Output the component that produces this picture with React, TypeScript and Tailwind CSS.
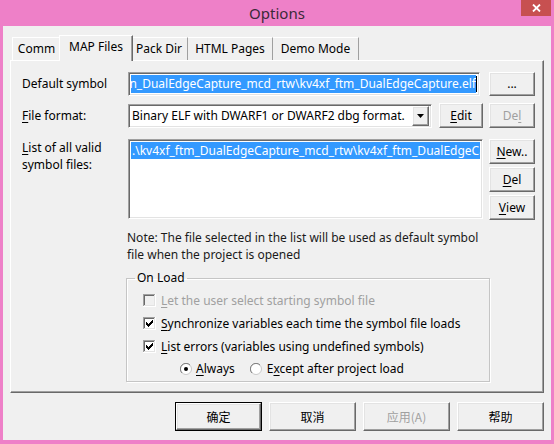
import React from "react";

const raised =
  "border border-t-white border-l-white border-r-[#696969] border-b-[#696969] shadow-[inset_-1px_-1px_0_#a0a0a0,inset_1px_1px_0_#e3e3e3]";
const sunken =
  "border border-t-[#a0a0a0] border-l-[#a0a0a0] border-r-white border-b-white shadow-[inset_1px_1px_0_#696969,inset_-1px_-1px_0_#e3e3e3]";

function U({ children }: { children: React.ReactNode }) {
  return <span className="underline underline-offset-2 decoration-1">{children}</span>;
}

function Btn({
  children,
  className = "",
  disabled = false,
}: {
  children: React.ReactNode;
  className?: string;
  disabled?: boolean;
}) {
  return (
    <div
      className={`${raised} bg-[#f0f0f0] flex items-center justify-center ${
        disabled ? "text-[#a0a0a0]" : "text-black"
      } ${className}`}
    >
      {children}
    </div>
  );
}

const checkPixels = [
  [3, 5], [3, 6], [3, 7],
  [4, 6], [4, 7], [4, 8],
  [5, 7], [5, 8], [5, 9],
  [6, 6], [6, 7], [6, 8],
  [7, 5], [7, 6], [7, 7],
  [8, 4], [8, 5], [8, 6],
  [9, 3], [9, 4], [9, 5],
];

function CheckBox({ checked, disabled }: { checked?: boolean; disabled?: boolean }) {
  const fill = disabled ? "#f0f0f0" : "#ffffff";
  return (
    <svg width="13" height="13" viewBox="0 0 13 13" className="shrink-0">
      <rect x="0" y="0" width="13" height="13" fill="#ffffff" />
      <rect x="0" y="0" width="12" height="12" fill="#a0a0a0" />
      <rect x="1" y="1" width="11" height="11" fill="#e3e3e3" />
      <rect x="1" y="1" width="10" height="10" fill="#696969" />
      <rect x="2" y="2" width="9" height="9" fill={fill} />
      {checked &&
        checkPixels.map(([x, y]) => (
          <rect key={`${x}-${y}`} x={x} y={y} width="1" height="1" fill="#000" />
        ))}
    </svg>
  );
}

function Radio({ checked }: { checked?: boolean }) {
  return (
    <svg width="12" height="12" viewBox="0 0 12 12" className="shrink-0">
      <circle cx="6" cy="6" r="5.5" fill="#ffffff" stroke="#c8c8c8" />
      <path d="M2 10 A5.5 5.5 0 0 1 10 2" fill="none" stroke="#808080" strokeWidth="1" />
      <circle cx="6" cy="6" r="4.2" fill="#ffffff" />
      {checked && <circle cx="6" cy="6" r="2" fill="#000" />}
    </svg>
  );
}

export default function App() {
  return (
    <div className="w-[554px] h-[444px] bg-[#ee80c8] flex flex-col overflow-hidden font-['Segoe_UI','Noto_Sans',sans-serif] text-[12px] text-black">
      {/* Title bar */}
      <div className="relative h-[26px] shrink-0 flex items-center justify-center">
        <span className="text-[15px] text-[#3b2a38] leading-none">Options</span>
        <div className="absolute right-[3px] top-0 w-[30px] h-[16px] bg-[#c75050] flex items-center justify-center">
          <svg width="9" height="8" viewBox="0 0 9 8">
            <path d="M1 0.5 L8 7.5 M8 0.5 L1 7.5" stroke="#ffffff" strokeWidth="1.8" />
          </svg>
        </div>
      </div>

      {/* Client area */}
      <div className="mx-[3px] h-[414px] shrink-0 bg-[#f0f0f0] flex flex-col">
        {/* Tabs */}
        <div className="mt-[9px] ml-[9px] h-[25px] flex items-end relative z-10">
          <div className="w-[49px] h-[23px] border-t border-l border-white border-r border-r-[#a0a0a0] flex items-center justify-center">
            Comm
          </div>
          <div className="w-[74px] -mx-[2px] h-[26px] -mb-px bg-[#f0f0f0] border-t border-l border-white border-r border-r-[#696969] shadow-[inset_-1px_0_0_#a0a0a0] flex items-start justify-center pt-[2px] relative z-10">
            MAP Files
          </div>
          <div className="w-[57px] h-[23px] border-t border-white border-r border-r-[#a0a0a0] flex items-center justify-center">
            Pack Dir
          </div>
          <div className="w-[85px] h-[23px] border-t border-white border-r border-r-[#a0a0a0] flex items-center justify-center">
            HTML Pages
          </div>
          <div className="w-[86px] h-[23px] border-t border-white border-r border-r-[#a0a0a0] flex items-center justify-center">
            Demo Mode
          </div>
        </div>

        {/* Tab panel */}
        <div className="ml-[7px] w-[534px] h-[333px] border-t border-l border-white border-r border-b border-r-[#696969] border-b-[#696969] shadow-[inset_-1px_-1px_0_#a0a0a0] pl-[11px] pt-[11px] flex flex-col">
          {/* Default symbol */}
          <div className="flex items-center h-[24px]">
            <div className="w-[106px]">Default symbol</div>
            <div className={`${sunken} w-[352px] h-[24px] bg-white flex items-center px-[2px]`}>
              <div className="flex-1 h-[18px] bg-[#3399ff] text-white leading-[18px] overflow-hidden flex justify-end">
                <span className="shrink-0 whitespace-nowrap">
                  n_DualEdgeCapture_mcd_rtw\kv4xf_ftm_DualEdgeCapture.elf
                </span>
              </div>
              <div className="w-px h-[16px] bg-black shrink-0" />
            </div>
            <Btn className="ml-[9px] w-[46px] h-[24px]">...</Btn>
          </div>

          {/* File format */}
          <div className="flex items-center h-[25px] mt-[7px]">
            <div className="w-[106px]">
              <U>F</U>ile format:
            </div>
            <div className={`${sunken} w-[304px] h-[24px] bg-white flex items-center pl-[3px] pr-[2px]`}>
              <div className="flex-1 overflow-hidden whitespace-nowrap">
                Binary ELF with DWARF1 or DWARF2 dbg format.
              </div>
              <div className={`${raised} w-[17px] h-[20px] shrink-0 bg-[#f0f0f0] flex items-center justify-center`}>
                <svg width="7" height="4" viewBox="0 0 7 4">
                  <path d="M0 0 H7 L3.5 4 Z" fill="#000" />
                </svg>
              </div>
            </div>
            <Btn className="ml-[7px] w-[44px] h-[25px]">
              <span>
                <U>E</U>dit
              </span>
            </Btn>
            <Btn disabled className="ml-[6px] w-[46px] h-[25px]">
              <span>
                De<U>l</U>
              </span>
            </Btn>
          </div>

          {/* List of symbol files */}
          <div className="flex items-start mt-[11px]">
            <div className="w-[106px] leading-[17px]">
              <U>L</U>ist of all valid
              <br />
              symbol files:
            </div>
            <div className={`${sunken} w-[355px] h-[80px] bg-white p-[2px]`}>
              <div className="h-[17px] bg-[#3399ff] text-white whitespace-nowrap overflow-hidden leading-[17px] pl-[1px]">
                .\kv4xf_ftm_DualEdgeCapture_mcd_rtw\kv4xf_ftm_DualEdgeCa
              </div>
            </div>
            <div className="ml-[6px] flex flex-col gap-[3px]">
              <Btn className="w-[46px] h-[25px]">
                <span>
                  <U>N</U>ew..
                </span>
              </Btn>
              <Btn className="w-[46px] h-[25px]">
                <span>
                  <U>D</U>el
                </span>
              </Btn>
              <Btn className="w-[46px] h-[25px]">
                <span>
                  <U>V</U>iew
                </span>
              </Btn>
            </div>
          </div>

          {/* Note */}
          <div className="ml-[105px] mt-[9px] leading-[17px] text-[#1a1a1a]">
            Note: The file selected in the list will be used as default symbol
            <br />
            file when the project is opened
          </div>

          {/* On Load group */}
          <fieldset className="ml-[104px] mt-[7px] w-[364px] h-[112px] border border-[#c5c5c5] shadow-[inset_1px_1px_0_#ffffff,1px_1px_0_#ffffff] px-[16px]">
            <legend className="ml-[-8px] px-[2px] leading-[16px]">On Load</legend>
            <div className="flex flex-col mt-[3px]">
              <div className="h-[23px] flex items-center gap-[5px] text-[#a0a0a0]">
                <CheckBox disabled />
                <span>
                  <U>L</U>et the user select starting symbol file
                </span>
              </div>
              <div className="h-[23px] flex items-center gap-[5px]">
                <CheckBox checked />
                <span>
                  <U>S</U>ynchronize variables each time the symbol file loads
                </span>
              </div>
              <div className="h-[23px] flex items-center gap-[5px]">
                <CheckBox checked />
                <span>
                  <U>L</U>ist errors (variables using undefined symbols)
                </span>
              </div>
              <div className="h-[22px] flex items-center pl-[37px]">
                <Radio checked />
                <span className="ml-[4px]">
                  <U>A</U>lways
                </span>
                <div className="ml-[15px]">
                  <Radio />
                </div>
                <span className="ml-[5px]">
                  E<U>x</U>cept after project load
                </span>
              </div>
            </div>
          </fieldset>
        </div>

        {/* Dialog buttons */}
        <div className="mt-[9px] pr-[7px] flex justify-end gap-[7px] font-['Microsoft_YaHei','Noto_Sans_CJK_SC',sans-serif] text-[12px]">
          <div className="w-[87px] h-[29px] border border-black">
            <Btn className="w-full h-full">确定</Btn>
          </div>
          <Btn className="w-[87px] h-[29px]">取消</Btn>
          <Btn disabled className="w-[87px] h-[29px]">
            应用(A)
          </Btn>
          <Btn className="w-[87px] h-[29px]">帮助</Btn>
        </div>
      </div>
    </div>
  );
}
